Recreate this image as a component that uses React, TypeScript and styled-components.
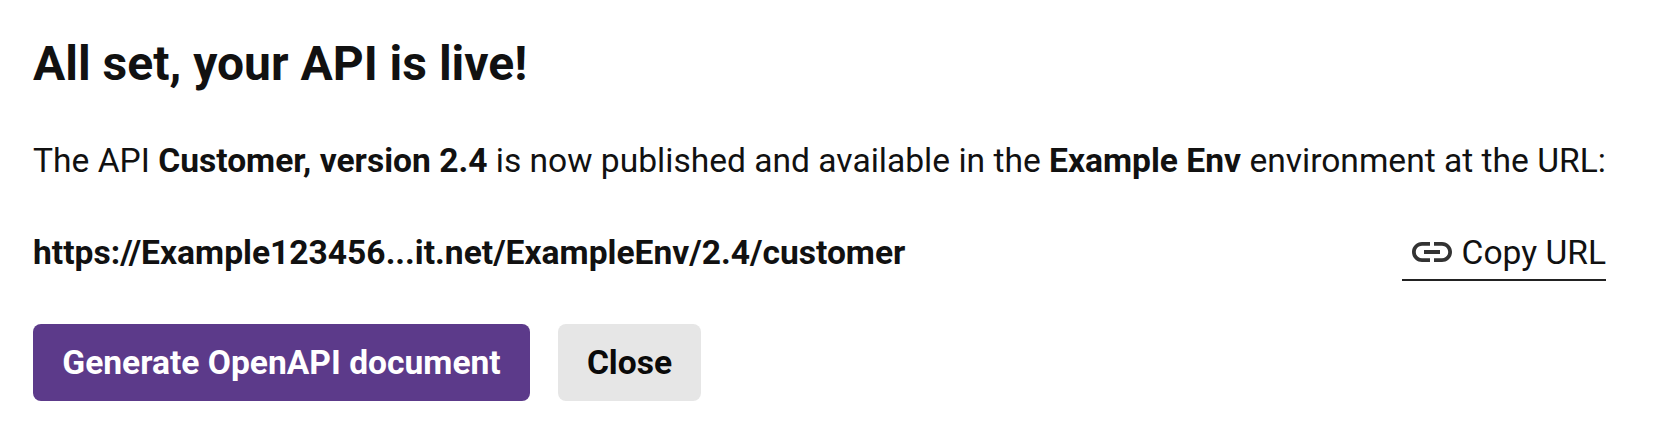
import styled, {createGlobalStyle} from "styled-components";

const GlobalStyle = createGlobalStyle`
  html, body {
    margin: 0;
    background: #fff;
    color: #111;
    font-family: Roboto, "Liberation Sans", sans-serif;
  }
`

function LinkIcon() {
  return (
    <svg width="48" height="48" viewBox="0 0 24 24" fill="#333">
      <path d="M3.9 12c0-1.71 1.39-3.1 3.1-3.1h4V7H7c-2.76 0-5 2.24-5 5s2.24 5 5 5h4v-1.9H7c-1.71 0-3.1-1.39-3.1-3.1zM8 13h8v-2H8v2zm9-6h-4v1.9h4c1.71 0 3.1 1.39 3.1 3.1s-1.39 3.1-3.1 3.1h-4V17h4c2.76 0 5-2.24 5-5s-2.24-5-5-5z"/>
    </svg>
  )
}

export default function App() {
  return (
    <>
      <GlobalStyle/>
      <Dialog>
        <Title>All set, your API is live!</Title>
        <Message>
          The API <b>Customer, version 2.4</b> is now published and available in the <b>Example Env</b> environment at the URL:
        </Message>
        <UrlRow>
          <Url>https://Example123456...it.net/ExampleEnv/2.4/customer</Url>
          <CopyLink><LinkIcon/>Copy URL</CopyLink>
        </UrlRow>
        <Actions>
          <PrimaryButton>Generate OpenAPI document</PrimaryButton>
          <SecondaryButton>Close</SecondaryButton>
        </Actions>
      </Dialog>
    </>
  )
}

const Dialog = styled.div`
  width: 1654px;
  height: 432px;
  box-sizing: border-box;
  padding: 32px 42px 0 33px;
`

const Title = styled.h1`
  margin: 0;
  font-size: 48px;
  line-height: 64px;
  font-weight: 700;
`

const Message = styled.p`
  margin: 43px 0 0;
  font-size: 33.6px;
  line-height: 44px;
  white-space: nowrap;
`

const UrlRow = styled.div`
  display: flex;
  justify-content: space-between;
  align-items: center;
  margin-top: 42px;
  padding-right: 6px;
`

const Url = styled.span`
  font-size: 33.6px;
  font-weight: 700;
  line-height: 44px;
`

const CopyLink = styled.a`
  display: flex;
  align-items: center;
  gap: 6px;
  height: 56px;
  padding: 0 0 0 6px;
  border-bottom: 2px solid #222;
  font-size: 33.6px;
  box-sizing: border-box;
`

const Actions = styled.div`
  display: flex;
  gap: 28px;
  margin-top: 43px;
`

const PrimaryButton = styled.button`
  height: 77px;
  width: 497px;
  border: 0;
  border-radius: 8px;
  background: #5c3a8a;
  color: #fff;
  font: 700 33.6px Roboto, sans-serif;
`

const SecondaryButton = styled.button`
  height: 77px;
  width: 143px;
  border: 0;
  border-radius: 8px;
  background: #e6e6e6;
  color: #0a0a0a;
  font: 700 33.6px Roboto, sans-serif;
`
